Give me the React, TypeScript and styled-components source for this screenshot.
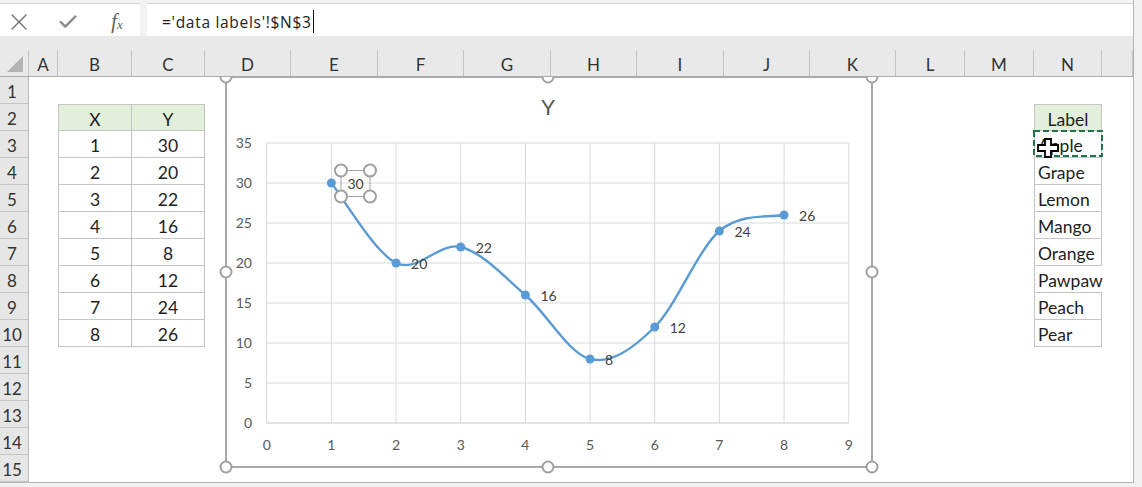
import React from 'react';
import styled, { createGlobalStyle, css } from 'styled-components';
import { X, Check } from 'lucide-react';

const GlobalStyle = createGlobalStyle`
  html, body {
    margin: 0;
    padding: 0;
    background: #f1f1f1;
  }
  body {
    font-family: Lato, "Liberation Sans", sans-serif;
    color: #1e1e1e;
  }
`;

// column widths: row header, A..N, then the cut-off O
const COLS = [29, 29, 74, 73, 86, 87, 86, 87, 86, 87, 86, 86, 69, 69, 68, 31];
const LETTERS = ['', 'A', 'B', 'C', 'D', 'E', 'F', 'G', 'H', 'I', 'J', 'K', 'L', 'M', 'N', ''];
const TEMPLATE = COLS.map((w) => `${w}px`).join(' ');
const ROWS = Array.from({ length: 15 }, (_, i) => i + 1);

const YS = [30, 20, 22, 16, 8, 12, 24, 26];
const FRUITS = ['Apple', 'Grape', 'Lemon', 'Mango', 'Orange', 'Pawpaw', 'Peach', 'Pear'];

const Window = styled.div`
  width: 1133px;
  height: 482px;
  background: #fff;
  border-right: 1px solid #b5b5b5;
  border-bottom: 1px solid #b5b5b5;
  display: flex;
  flex-direction: column;
  overflow: hidden;
`;

const FormulaBar = styled.div`
  display: flex;
  gap: 7px;
  height: 36px;
  padding-top: 3px;
  box-sizing: border-box;
  background: #f2f2f2;
`;

const FormulaBox = styled.div<{ $width?: number }>`
  flex: ${(p) => (p.$width ? `0 0 ${p.$width}px` : '1')};
  display: flex;
  align-items: center;
  gap: ${(p) => (p.$width ? '11px' : '0')};
  padding-left: ${(p) => (p.$width ? '0' : '15px')};
  background: #fff;
  border-top: 1px solid #d8d8d8;
`;

const IconSlot = styled.span`
  width: 38px;
  display: flex;
  justify-content: center;
  align-items: center;
  padding-top: 3px;
  color: #7c7c7c;
`;

const Fx = styled.span`
  font-family: "Liberation Serif", serif;
  font-style: italic;
  font-size: 20px;
  color: #606060;
  sub {
    font-size: 13px;
    vertical-align: -1px;
  }
`;

const FormulaText = styled.span`
  font-family: "Open Sans", Lato, sans-serif;
  font-size: 15.5px;
  letter-spacing: 0.7px;
  color: #222;
  padding-top: 3px;
`;

const Caret = styled.span`
  display: inline-block;
  width: 1px;
  height: 23px;
  background: #111;
  margin: 3px 0 0 1px;
`;

const HeaderBand = styled.div`
  height: 41px;
  flex: 0 0 41px;
  box-sizing: border-box;
  display: grid;
  grid-template-columns: ${TEMPLATE};
  align-items: end;
  background: #e9e9e9;
  border-bottom: 1px solid #ababab;
`;

const ColHead = styled.div<{ $corner?: boolean }>`
  height: 26px;
  box-sizing: border-box;
  display: flex;
  align-items: ${(p) => (p.$corner ? 'flex-end' : 'center')};
  justify-content: ${(p) => (p.$corner ? 'flex-end' : 'center')};
  padding: ${(p) => (p.$corner ? '0 5px 4px 0' : '2px 0 0')};
  border-right: 1px solid #c2c2c2;
  font-size: 17px;
  color: #333;
`;

const SelectAll = styled.span`
  width: 0;
  height: 0;
  border-left: 16px solid transparent;
  border-bottom: 16px solid #b4b4b4;
`;

const Body = styled.div`
  position: relative;
  flex: 1;
  overflow: hidden;
`;

const Grid = styled.div`
  display: grid;
  grid-template-columns: ${TEMPLATE};
  grid-auto-rows: 27px;
`;

const RowHead = styled.div`
  box-sizing: border-box;
  display: flex;
  align-items: center;
  justify-content: center;
  padding: 3px 4px 0 0;
  background: #e6e6e6;
  border-right: 1px solid #b9b9b9;
  border-bottom: 1px solid #c4c4c4;
  font-size: 17px;
  color: #333;
`;

type Kind = 'plain' | 'head' | 'data';

const Cell = styled.div<{
  $kind: Kind;
  $align: 'left' | 'center';
  $top?: boolean;
  $left?: boolean;
  $open?: boolean;
}>`
  position: relative;
  box-sizing: border-box;
  display: flex;
  align-items: center;
  justify-content: ${(p) => (p.$align === 'left' ? 'flex-start' : 'center')};
  padding: ${(p) => (p.$align === 'left' ? '3px 3px 0' : '3px 0 0')};
  white-space: nowrap;
  font-size: 17.5px;
  color: #1e1e1e;
  background: ${(p) => (p.$kind === 'head' ? '#e2efda' : p.$kind === 'data' ? '#fff' : 'transparent')};
  ${(p) =>
    p.$kind !== 'plain' &&
    css`
      border-bottom: 1px solid #c4c4c4;
      border-right: ${p.$open ? 'none' : '1px solid #c4c4c4'};
      border-left: ${p.$left ? '1px solid #c4c4c4' : 'none'};
      border-top: ${p.$top ? '1px solid #c4c4c4' : 'none'};
    `}
`;

const CopyMarquee = styled.svg`
  position: absolute;
  left: -2px;
  top: -1px;
  overflow: visible;
`;

const CursorCross = styled.svg`
  position: absolute;
  left: 2px;
  top: 7px;
`;

const ChartLayer = styled.svg`
  position: absolute;
  left: 221px;
  top: -5px;
  overflow: visible;
  font-family: Lato, "Liberation Sans", sans-serif;
`;

type CellInfo = {
  text: string;
  kind: Kind;
  align: 'left' | 'center';
  top?: boolean;
  left?: boolean;
  open?: boolean;
  copied?: boolean;
};

const cellFor = (row: number, col: string): CellInfo => {
  if ((col === 'B' || col === 'C') && row === 2) {
    return { text: col === 'B' ? 'X' : 'Y', kind: 'head', align: 'center', top: true, left: col === 'B' };
  }
  if ((col === 'B' || col === 'C') && row >= 3 && row <= 10) {
    const i = row - 3;
    return { text: String(col === 'B' ? i + 1 : YS[i]), kind: 'data', align: 'center', left: col === 'B' };
  }
  if (col === 'N' && row === 2) {
    return { text: 'Label', kind: 'head', align: 'center', top: true, left: true };
  }
  if (col === 'N' && row >= 3 && row <= 10) {
    return { text: FRUITS[row - 3], kind: 'data', align: 'left', left: true, open: row === 8, copied: row === 3 };
  }
  return { text: '', kind: 'plain', align: 'center' };
};

// chart scale (page pixels)
const px = (v: number) => 266.7 + v * 64.67;
const py = (v: number) => 423 - v * 8;

const smoothPath = (p: number[][]) => {
  let d = `M${p[0][0]},${p[0][1]}`;
  for (let i = 0; i < p.length - 1; i++) {
    const p0 = p[i - 1] || p[i];
    const p1 = p[i];
    const p2 = p[i + 1];
    const p3 = p[i + 2] || p2;
    const c1 = [p1[0] + (p2[0] - p0[0]) / 6, p1[1] + (p2[1] - p0[1]) / 6];
    const c2 = [p2[0] - (p3[0] - p1[0]) / 6, p2[1] - (p3[1] - p1[1]) / 6];
    d += ` C${c1[0]},${c1[1]} ${c2[0]},${c2[1]} ${p2[0]},${p2[1]}`;
  }
  return d;
};

const Handle = ({ x, y, r = 5.5 }: { x: number; y: number; r?: number }) => (
  <circle cx={x} cy={y} r={r} fill="#fff" stroke="#a0a0a0" strokeWidth={2} />
);

const Chart = () => {
  const pts = YS.map((v, i) => [px(i + 1), py(v)]);
  const xTicks = Array.from({ length: 10 }, (_, i) => i);
  const yTicks = [0, 5, 10, 15, 20, 25, 30, 35];
  return (
    <ChartLayer width={656} height={400}>
      <g transform="translate(-221,-72)">
        <rect x={226} y={77} width={646} height={390} fill="#fff" stroke="#a8a8a8" strokeWidth={2} />
        {xTicks.map((v) => (
          <line key={`vx${v}`} x1={px(v)} x2={px(v)} y1={py(35)} y2={py(0)} stroke="#d9d9d9" strokeWidth={1} />
        ))}
        {yTicks.map((v) => (
          <line key={`hy${v}`} x1={px(0)} x2={px(9)} y1={py(v)} y2={py(v)} stroke={v === 0 ? '#c9c9c9' : '#d9d9d9'} strokeWidth={1} />
        ))}
        {yTicks.map((v) => (
          <text key={`ty${v}`} x={252} y={py(v)} dy="0.35em" textAnchor="end" fontSize={14} fill="#595959">
            {v}
          </text>
        ))}
        {xTicks.map((v) => (
          <text key={`tx${v}`} x={px(v)} y={445} dy="0.35em" textAnchor="middle" fontSize={14} fill="#595959">
            {v}
          </text>
        ))}
        <text x={548} y={107} dy="0.35em" textAnchor="middle" fontSize={22} fill="#595959">
          Y
        </text>
        <path d={smoothPath(pts)} fill="none" stroke="#5b9bd5" strokeWidth={2.4} strokeLinecap="round" />
        {pts.map(([x, y], i) => (
          <circle key={`m${i}`} cx={x} cy={y} r={4.5} fill="#5b9bd5" />
        ))}
        {pts.map(([x, y], i) =>
          i === 0 ? (
            <text key={`l${i}`} x={355.5} y={184} dy="0.35em" textAnchor="middle" fontSize={14} fill="#404040">
              {YS[i]}
            </text>
          ) : (
            <text key={`l${i}`} x={x + 15} y={y + 1} dy="0.35em" fontSize={14} fill="#404040">
              {YS[i]}
            </text>
          )
        )}
        <rect x={341} y={170.5} width={29} height={26} fill="none" stroke="#a6a6a6" strokeWidth={1} />
        <Handle x={341} y={170.5} r={6} />
        <Handle x={370} y={170.5} r={6} />
        <Handle x={341} y={196.5} r={6} />
        <Handle x={370} y={196.5} r={6} />
        {[226, 548, 872].map((x) =>
          [77, 272, 467].map((y) => (x === 548 && y === 272 ? null : <Handle key={`h${x}-${y}`} x={x} y={y} />))
        )}
      </g>
    </ChartLayer>
  );
};

export default function App() {
  return (
    <>
      <GlobalStyle />
      <Window>
        <FormulaBar>
          <FormulaBox $width={140}>
            <IconSlot>
              <X size={28} strokeWidth={1.2} color="#707070" />
            </IconSlot>
            <IconSlot>
              <Check size={22} strokeWidth={2.6} color="#8a8a8a" />
            </IconSlot>
            <IconSlot>
              <Fx>
                f<sub>x</sub>
              </Fx>
            </IconSlot>
          </FormulaBox>
          <FormulaBox>
            <FormulaText>='data labels'!$N$3</FormulaText>
            <Caret />
          </FormulaBox>
        </FormulaBar>

        <HeaderBand>
          {LETTERS.map((l, i) =>
            i === 0 ? (
              <ColHead key="corner" $corner>
                <SelectAll />
              </ColHead>
            ) : (
              <ColHead key={`c${i}`}>{l}</ColHead>
            )
          )}
        </HeaderBand>

        <Body>
          <Grid>
            {ROWS.map((r) => (
              <React.Fragment key={r}>
                <RowHead>{r}</RowHead>
                {LETTERS.slice(1).map((col, ci) => {
                  const c = cellFor(r, col);
                  return (
                    <Cell
                      key={`${r}-${ci}`}
                      $kind={c.kind}
                      $align={c.align}
                      $top={c.top}
                      $left={c.left}
                      $open={c.open}
                    >
                      {c.text}
                      {c.copied && (
                        <>
                          <CopyMarquee width={70} height={27}>
                            <rect x={1} y={1} width={68} height={25} fill="none" stroke="#217346" strokeWidth={2} strokeDasharray="6 3" />
                          </CopyMarquee>
                          <CursorCross width={22} height={20} viewBox="0 0 22 20">
                            <path
                              d="M8 1 H14 V7 H21 V13 H14 V19 H8 V13 H1 V7 H8 Z"
                              fill="#fff"
                              stroke="#000"
                              strokeWidth={1.8}
                              strokeLinejoin="miter"
                            />
                          </CursorCross>
                        </>
                      )}
                    </Cell>
                  );
                })}
              </React.Fragment>
            ))}
          </Grid>
          <Chart />
        </Body>
      </Window>
    </>
  );
}
